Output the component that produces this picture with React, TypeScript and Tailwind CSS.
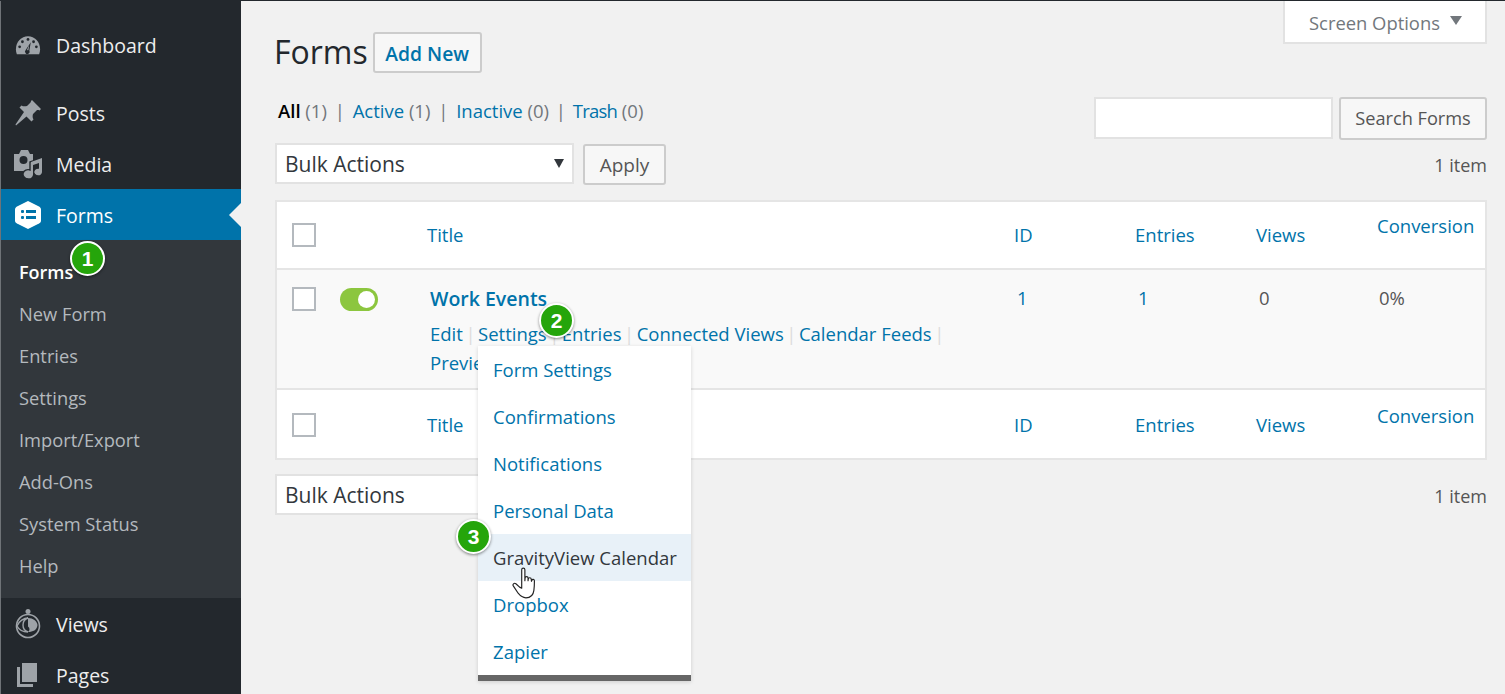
import { ReactNode } from 'react'

const font = { fontFamily: '"Open Sans", "Noto Sans", sans-serif' }

const DashIcon = () => (
  <svg width="26" height="26" viewBox="0 0 28 28" fill="#9ea3a8">
    <path d="M2 24c-.7-1.800-1-3.800-1-5.500C1 10.500 6.800 4.500 14 4.500s13 6 13 14c0 1.700-.3 3.700-1 5.500H2z" />
    <g fill="#23282d">
      <circle cx="14" cy="8" r="1.500" />
      <circle cx="8" cy="10.500" r="1.500" />
      <circle cx="20" cy="10.500" r="1.500" />
      <circle cx="5" cy="16" r="1.500" />
      <circle cx="23" cy="16" r="1.500" />
      <path d="M17 11l-1.500 9a2.500 2.500 0 1 1-4-.5z" />
    </g>
    <path d="M15.200 14l-.7 5.500a1 1 0 0 1-1.500-.5z" />
  </svg>
)

const PinIcon = () => (
  <svg width="28" height="28" viewBox="0 0 28 28" fill="#9ea3a8">
    <path d="M18 1l9 9-1.500 1.500c-1.200-.6-2.200-.6-3 0l-3.500 3.500c-.6 2 -.5 4 .5 5.500l-2 2-5-5L2 26.500 1.500 25.500 10 13 5.500 8.500l2-2c1.500 1 3.500 1.100 5.500.5L16.500 3.500c.6-.8.6-1.800 0-1z" />
  </svg>
)

const MediaIcon = () => (
  <svg width="30" height="30" viewBox="0 0 30 30" fill="#9ea3a8">
    <path d="M1 5h5l2-4h7l2 4h3v17H1z" />
    <circle cx="10.500" cy="11" r="4" fill="#23282d" />
    <g stroke="#23282d" strokeWidth="1.400">
      <path d="M17 13l12-4v14a4 3.500 0 1 1-3-3.300V14l-6 2v9a5 4.500 0 1 1-3-4z" />
    </g>
    <path d="M18 13l11-4v14a3.800 3.300 0 1 1-3-3.200V14l-6 2v9.500a4.200 3.800 0 1 1-2-3.200z" />
  </svg>
)

const FormsIcon = () => (
  <svg width="28" height="30" viewBox="0 0 28 30">
    <path d="M14 1l11 5.500c1 .5 2 1.500 2 3v11c0 1.500-1 2.500-2 3L14 29 3 23.500c-1-.5-2-1.500-2-3v-11c0-1.500 1-2.500 2-3z" fill="#fff" />
    <g fill="#0073aa">
      <rect x="7" y="10" width="3" height="3" rx="1" />
      <rect x="7" y="16" width="3" height="3" rx="1" />
      <rect x="12" y="10" width="10" height="3" />
      <rect x="12" y="16" width="10" height="3" />
    </g>
  </svg>
)

const ViewsIcon = () => (
  <svg width="26" height="32" viewBox="0 0 26 32" fill="none">
    <circle cx="13" cy="3.500" r="2.500" fill="#9ea3a8" />
    <circle cx="13" cy="18" r="11.500" stroke="#9ea3a8" strokeWidth="1.600" />
    <path d="M13 10c5 0 9 3 9.500 7-.5 5-4.500 7-9.500 7 2-1.500 2-4 0-5.500z" fill="#9ea3a8" />
    <path d="M2 18c2-5 7-8 11-8-3 1-5 4-5 7s2 6 5 7c-5 0-9-2-11-6z" stroke="#9ea3a8" strokeWidth="1.400" />
  </svg>
)

const PagesIcon = () => (
  <svg width="24" height="26" viewBox="0 0 24 26" fill="#9ea3a8">
    <path d="M6 1h15v19H6z" />
    <path d="M1 5h3v17h13v3H1z" />
  </svg>
)

const HandCursor = () => (
  <svg width="30" height="36" viewBox="0 0 28 34" fill="#fff" stroke="#222" strokeWidth="1.100" strokeLinejoin="round">
    <path d="M9 2.500c0-2 3-2 3 0v10.500l.2-2.500c0-1.800 2.800-1.800 2.800 0v2.500l.2-1.700c.2-1.600 2.600-1.500 2.800.2l.2 2 .4-1c.5-1.300 2.400-1 2.400.6 0 4-.2 7-.5 9-.5 4-2.500 7-7.500 7-4 0-5.500-2-7.500-4.500L1.200 18c-1.200-1.500.6-3.500 2.300-2.200L7 19l2 1z" />
  </svg>
)

const Badge = ({ n, className }: { n: number; className: string }) => (
  <div
    className={`absolute z-30 flex h-[35px] w-[35px] items-center justify-center rounded-full border-2 border-white bg-[#25a50b] text-[21px] font-bold text-white shadow-[0_1px_3px_rgba(0,0,0,0.45)] ${className}`}
    style={{ fontFamily: '"Liberation Sans", sans-serif' }}
  >
    {n}
  </div>
)

const MenuItem = ({ icon, label, active, className = '' }: { icon: ReactNode; label: string; active?: boolean; className?: string }) => (
  <div className={`relative flex h-[51px] items-center text-[19.500px] text-[#eee] ${active ? 'bg-[#0073aa] text-white' : ''} ${className}`}>
    <div className="flex w-[55px] shrink-0 justify-center pr-[1px]">{icon}</div>
    <span className="pt-[2px]">{label}</span>
    {active && (
      <div className="absolute right-0 top-[14px] h-0 w-0 border-y-[12px] border-r-[12px] border-y-transparent border-r-[#f1f1f1]" />
    )}
  </div>
)

const subItems = ['New Form', 'Entries', 'Settings', 'Import/Export', 'Add-Ons', 'System Status', 'Help']

const Sidebar = () => (
  <aside className="w-[241px] shrink-0 border-l border-[#6f7377] bg-[#23282d] pt-[18px]">
    <MenuItem icon={<DashIcon />} label="Dashboard" className="mb-[17px]" />
    <MenuItem icon={<PinIcon />} label="Posts" />
    <MenuItem icon={<MediaIcon />} label="Media" />
    <MenuItem icon={<FormsIcon />} label="Forms" active />
    <div className="bg-[#32373c] py-[11px] text-[18.300px] text-[#b4b9be]">
      <div className="flex h-[42px] items-center pl-[18px] text-[18px] font-semibold text-white">Forms</div>
      {subItems.map((s) => (
        <div key={s} className="flex h-[42px] items-center pl-[18px]">
          {s}
        </div>
      ))}
    </div>
    <MenuItem icon={<ViewsIcon />} label="Views" />
    <MenuItem icon={<PagesIcon />} label="Pages" />
  </aside>
)

const Checkbox = () => <div className="h-[24px] w-[24px] border-2 border-[#b4b9be] bg-white" />

const Button = ({ children, className = '' }: { children: ReactNode; className?: string }) => (
  <div className={`flex items-center justify-center rounded-[3px] border-2 border-[#ccc] bg-[#f7f7f7] ${className}`}>{children}</div>
)

const BulkActions = () => (
  <div className="flex items-start gap-[9px]">
    <div className="flex h-[41px] w-[299px] items-center justify-between border-2 border-[#e2e2e2] bg-white pl-[8px] pr-[8px] text-[21px] text-[#32373c]">
      <span className="pt-[2px]">Bulk Actions</span>
      <div className="h-0 w-0 border-x-[5px] border-t-[9px] border-x-transparent border-t-[#32373c]" />
    </div>
    <Button className="mt-[1px] h-[41px] w-[83px] pt-[2px] text-[19px] text-[#555]">Apply</Button>
  </div>
)

const gridCols = 'grid grid-cols-[63px_87px_587px_121px_121px_121px_1fr]'

const HeadRow = ({ border }: { border: string }) => (
  <div className={`${gridCols} h-[68px] items-center bg-white text-[18.500px] text-[#0073aa] ${border}`}>
    <div className="pl-[15px]">
      <Checkbox />
    </div>
    <div />
    <div>Title</div>
    <div>ID</div>
    <div>Entries</div>
    <div>Views</div>
    <div className="pb-[18px]">Conversion</div>
  </div>
)

const menuLinks = ['Form Settings', 'Confirmations', 'Notifications', 'Personal Data', 'GravityView Calendar', 'Dropbox', 'Zapier']

const SettingsMenu = () => (
  <div className="absolute left-0 top-[26px] z-20 w-[213px] border-b-[6px] border-[#666] bg-white shadow-[0_1px_4px_rgba(0,0,0,0.15)]">
    {menuLinks.map((m) => (
      <div
        key={m}
        className={`flex h-[47px] items-center whitespace-nowrap pl-[15px] ${m === 'GravityView Calendar' ? 'bg-[#e8f1f8] text-[#32373c]' : 'text-[#0073aa]'}`}
      >
        {m}
      </div>
    ))}
  </div>
)

const Sep = () => <span className="mx-[2.500px] text-[#ddd]">|</span>

const BodyRow = () => (
  <div className={`${gridCols} h-[120px] border-b-2 border-[#e5e5e5] bg-[#f9f9f9] text-[18.500px]`}>
    <div className="pl-[15px] pt-[17px]">
      <Checkbox />
    </div>
    <div className="pt-[18px]">
      <div className="flex h-[23px] w-[38px] items-center justify-end rounded-full bg-[#8cc63f] pr-[3px]">
        <div className="h-[17px] w-[17px] rounded-full bg-white" />
      </div>
    </div>
    <div className="pl-[3px] pt-[14px] text-[#0073aa]">
      <div className="text-[19.500px] font-semibold leading-[30px]">Work Events</div>
      <div className="mt-[5px] flex h-[30px] items-center whitespace-nowrap">
        Edit
        <Sep />
        <span className="relative">
          Settings
          <SettingsMenu />
        </span>
        <Sep />
        Entries
        <Sep />
        Connected Views
        <Sep />
        Calendar Feeds
        <Sep />
      </div>
      <div className="flex h-[28px] items-center">Preview</div>
    </div>
    <div className="pl-[3px] pt-[14px] text-[#0073aa]">1</div>
    <div className="pl-[3px] pt-[14px] text-[#0073aa]">1</div>
    <div className="pl-[3px] pt-[14px] text-[#555]">0</div>
    <div className="pl-[2px] pt-[14px] text-[#555]">0%</div>
  </div>
)

const Filters = () => (
  <div className="pl-[3px] text-[18.500px] text-[#72777c]">
    <span className="font-semibold text-black">All</span> (1) <span className="mx-[3px]">|</span> <span className="text-[#0073aa]">Active</span> (1){' '}
    <span className="mx-[3px]">|</span> <span className="text-[#0073aa]">Inactive</span> (0) <span className="mx-[2px]">|</span>{' '}
    <span className="tracking-[-0.800px] text-[#0073aa]">Trash</span> (0)
  </div>
)

export default function App() {
  return (
    <div className="relative h-[694px] w-[1505px] overflow-hidden border-t border-[#23282d] bg-[#f1f1f1]" style={font}>
      <div className="flex h-full">
        <Sidebar />
        <main className="flex-1 pl-[34px] pr-[18px]">
          {/* Title and screen options */}
          <div className="flex h-[72px] items-start justify-between">
            <div className="flex items-start gap-[5px] pt-[31px]">
              <h1 className="-ml-[1px] -mt-[1px] text-[32px] leading-[41px] text-[#23282d]">Forms</h1>
              <Button className="h-[41px] w-[109px] pt-[3px] text-[19.300px] font-semibold text-[#0073aa]">Add New</Button>
            </div>
            <div className="flex h-[43px] w-[204px] items-center gap-[10px] border-x-2 border-b-2 border-[#e2e2e2] bg-white pl-[24px] pt-[2px] text-[18.400px] text-[#72777c]">
              Screen Options
              <div className="mb-[4px] h-0 w-0 border-x-[6px] border-t-[9px] border-x-transparent border-t-[#72777c]" />
            </div>
          </div>

          {/* Filters and search */}
          <div className="mt-[24px] flex items-start justify-between">
            <Filters />
            <div className="flex gap-[6px]">
              <div className="h-[42px] w-[239px] border-2 border-[#e2e2e2] bg-white" />
              <Button className="h-[43px] w-[148px] text-[18.200px] text-[#555]">Search Forms</Button>
            </div>
          </div>

          <div className="mt-[3px] flex items-center justify-between">
            <BulkActions />
            <span className="mt-[2px] text-[18px] text-[#555]">1 item</span>
          </div>

          {/* Table */}
          <div className="mt-[15px] border-2 border-[#e5e5e5]">
            <HeadRow border="border-b-2 border-[#e5e5e5]" />
            <BodyRow />
            <HeadRow border="pt-[2px]" />
          </div>

          <div className="mt-[14px] flex items-center justify-between">
            <BulkActions />
            <span className="mt-[2px] text-[18px] text-[#555]">1 item</span>
          </div>
        </main>
      </div>

      <Badge n={1} className="left-[70px] top-[240px]" />
      <Badge n={2} className="left-[539px] top-[302px]" />
      <Badge n={3} className="left-[456px] top-[518px]" />
      <div className="absolute left-[512px] top-[566px] z-30">
        <HandCursor />
      </div>
    </div>
  )
}
